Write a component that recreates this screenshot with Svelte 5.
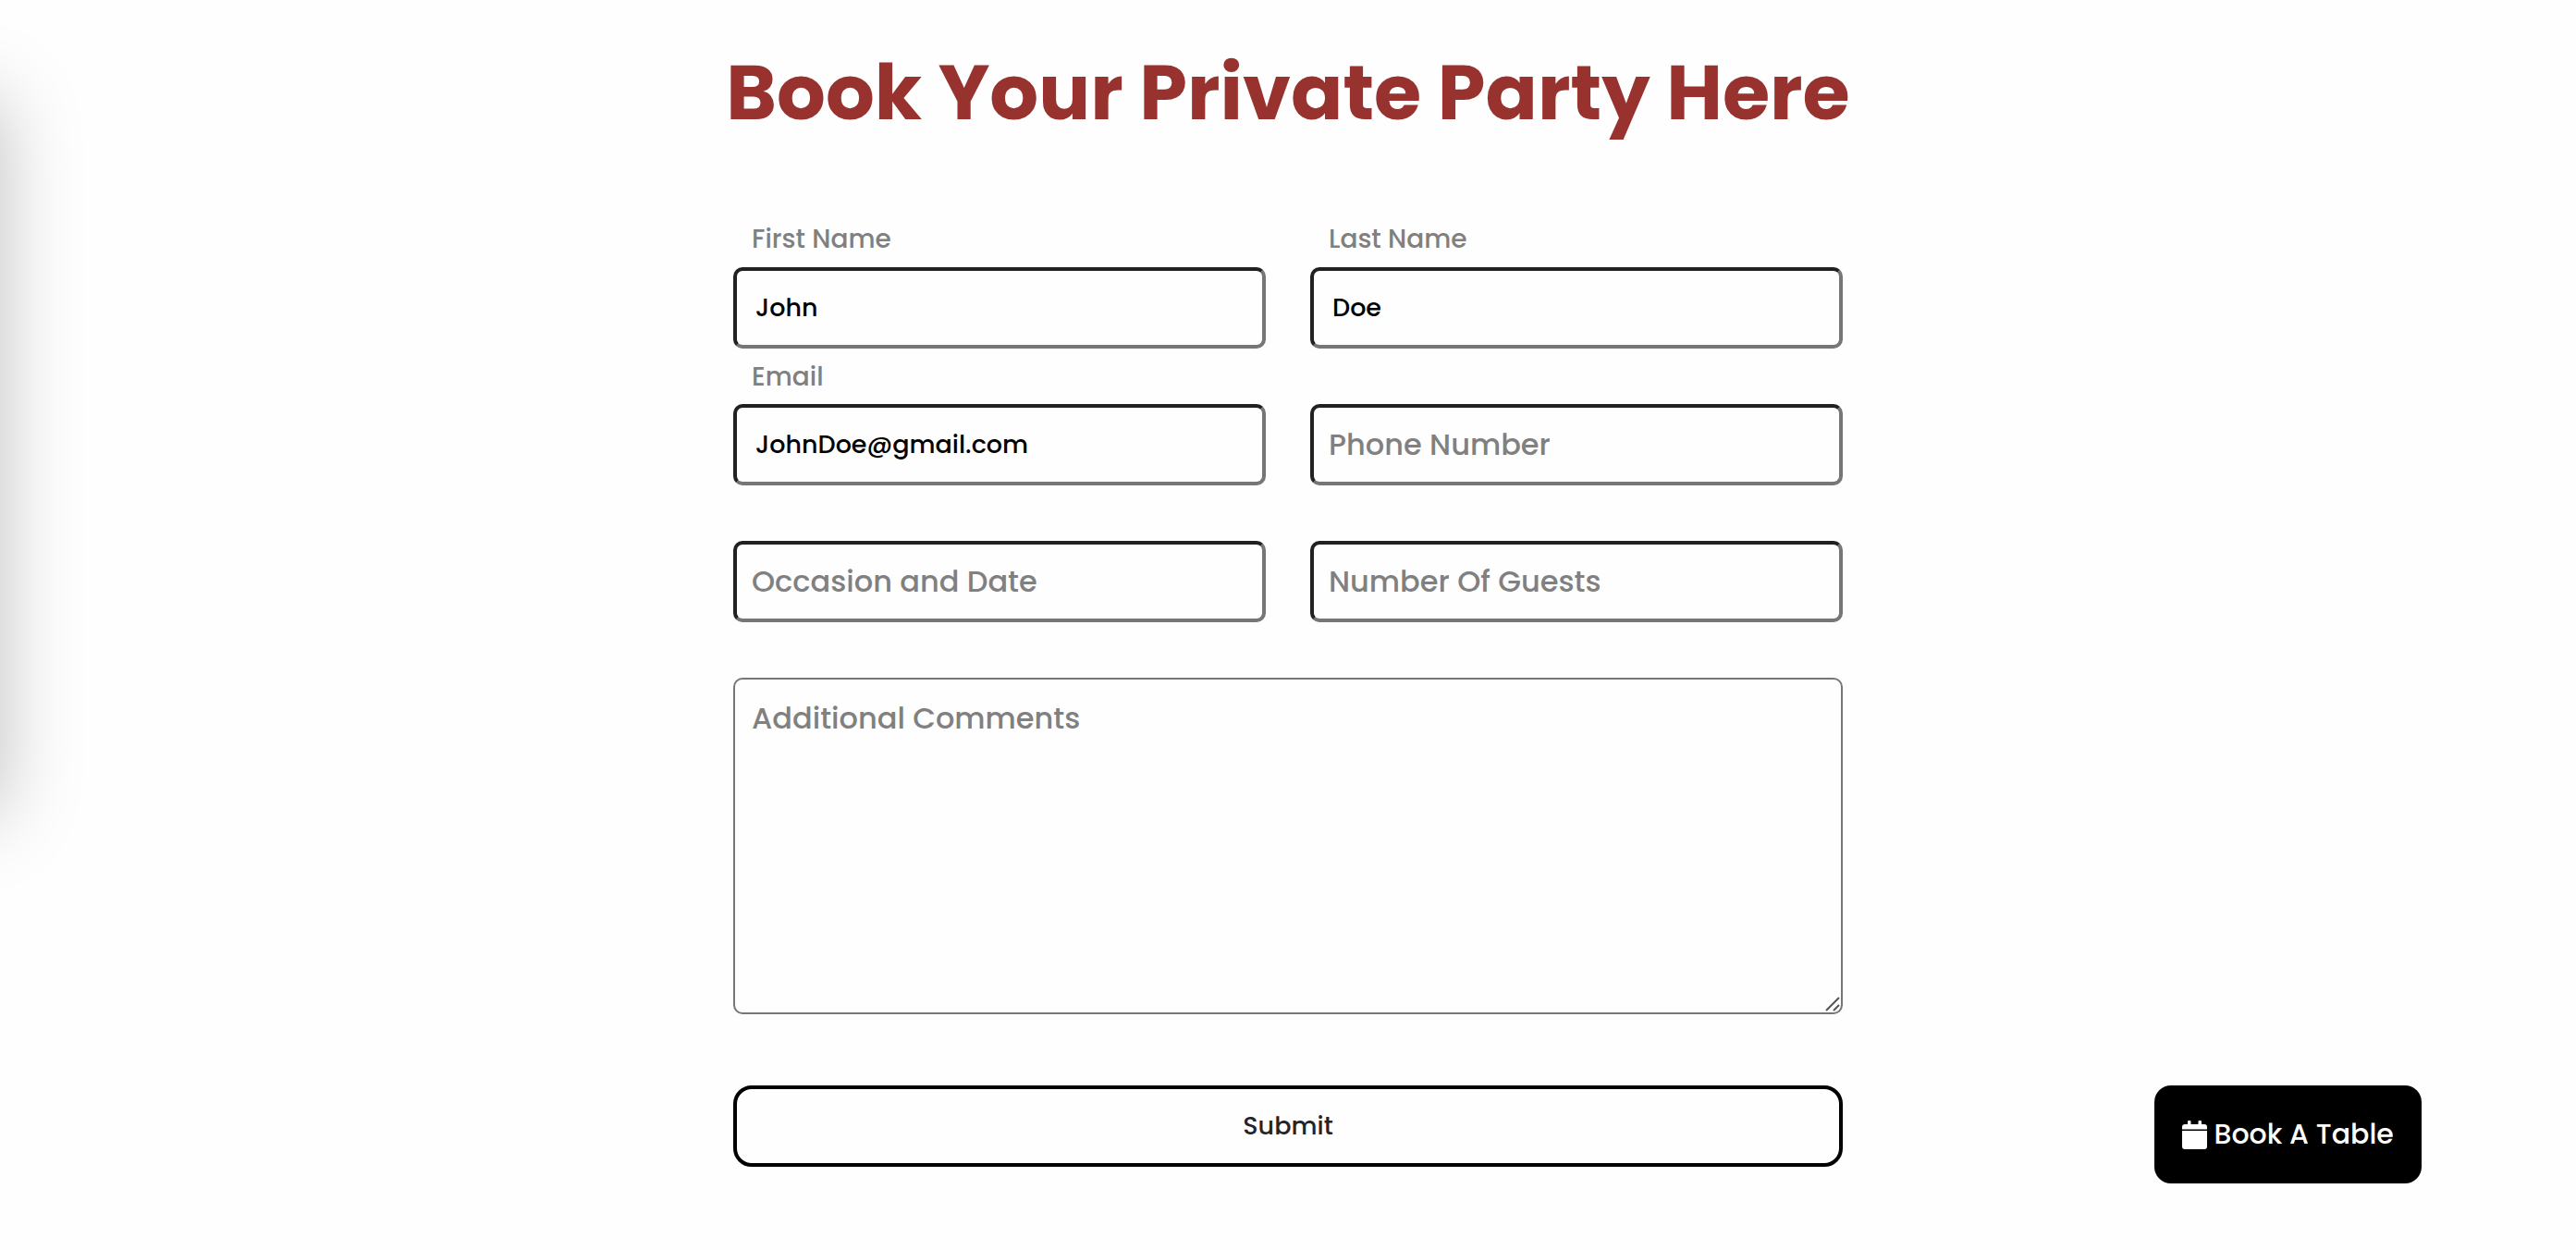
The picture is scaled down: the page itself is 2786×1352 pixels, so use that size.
<script>
  let fields = $state([
    { id: 'first-name', label: 'First Name', type: 'text', value: 'John' },
    { id: 'last-name', label: 'Last Name', type: 'text', value: 'Doe' },
    { id: 'email', label: 'Email', type: 'email', value: 'JohnDoe@gmail.com' },
    { id: 'phone', label: 'Phone Number', type: 'tel', value: '' },
    { id: 'occasion', label: 'Occasion and Date', type: 'text', value: '' },
    { id: 'guests', label: 'Number Of Guests', type: 'text', value: '' },
  ]);
  let comments = $state('');
</script>

<div class="page">
  <div class="side-shadow" aria-hidden="true"></div>
  <main>
    <h1>Book Your Private Party Here</h1>
    <form onsubmit={(e) => e.preventDefault()}>
      {#each fields as field (field.id)}
        <div class="field" class:filled={field.value !== ''}>
          <label for={field.id}>{field.label}</label>
          <input id={field.id} type={field.type} bind:value={field.value} />
        </div>
      {/each}
      <div class="field wide" class:filled={comments !== ''}>
        <label for="comments">Additional Comments</label>
        <textarea id="comments" bind:value={comments}></textarea>
        <svg class="grip" viewBox="0 0 16 16" aria-hidden="true">
          <path d="M1 15L15 1M9 15L15 9" />
        </svg>
      </div>
      <button class="submit" type="submit">Submit</button>
    </form>
  </main>
  <a class="book" href="#book">
    <svg viewBox="0 0 27 31" aria-hidden="true">
      <path d="M6 4V1.5a1.7 1.7 0 0 1 3.5 0V4h8V1.5a1.7 1.7 0 0 1 3.5 0V4h3a3 3 0 0 1 3 3v2.5H0V7a3 3 0 0 1 3-3zM0 11h27v17a3 3 0 0 1-3 3H3a3 3 0 0 1-3-3z" />
    </svg>
    <span>Book A Table</span>
  </a>
</div>

<style>
  :global(body) {
    margin: 0;
    background: #fefefe;
  }
  .page {
    position: relative;
    min-height: 100vh;
    overflow: hidden;
    box-sizing: border-box;
    padding: 40px 24px 88px;
    font-family: Poppins, Inter, "Liberation Sans", sans-serif;
    font-weight: 500;
  }
  .side-shadow {
    position: absolute;
    top: 108px;
    left: -400px;
    width: 400px;
    height: 772px;
    box-shadow: 0 0 80px rgba(0, 0, 0, 0.25);
  }
  h1 {
    margin: 0 0 68px;
    text-align: center;
    font-size: 83px;
    line-height: 120px;
    font-weight: 700;
    color: #97322e;
  }
  form {
    display: grid;
    grid-template-columns: 1fr 1fr;
    column-gap: 48px;
    max-width: 1200px;
    margin: 0 auto;
  }
  .field {
    display: grid;
    grid-template-rows: 61px auto;
  }
  .field:nth-child(n + 3) {
    grid-template-rows: 60px auto;
  }
  .wide,
  .submit {
    grid-column: 1 / -1;
  }
  label {
    grid-area: 2 / 1;
    align-self: start;
    justify-self: start;
    z-index: 1;
    padding-left: 20px;
    font-size: 32px;
    line-height: 88px;
    color: #808080;
    pointer-events: none;
  }
  .filled label {
    grid-area: 1 / 1;
    font-size: 28px;
    line-height: 62px;
  }
  input,
  textarea {
    grid-area: 2 / 1;
    box-sizing: border-box;
    width: 100%;
    background: transparent;
    border-radius: 10px;
    font-family: inherit;
    font-size: 27px;
    font-weight: inherit;
    color: #000;
  }
  input {
    height: 88px;
    padding: 0 20px;
    border: 4px solid #767676;
    border-top-color: #212121;
    border-left-color: #212121;
  }
  textarea {
    display: block;
    height: 364px;
    padding: 24px 20px;
    border: 2px solid #767676;
    resize: vertical;
  }
  textarea::-webkit-resizer {
    background: transparent;
  }
  .grip {
    grid-area: 2 / 1;
    align-self: end;
    justify-self: end;
    width: 16px;
    height: 16px;
    margin: 3px;
    fill: none;
    stroke: #555;
    stroke-width: 2;
    pointer-events: none;
  }
  .submit {
    height: 88px;
    margin-top: 77px;
    background: transparent;
    border: 4px solid #000;
    border-radius: 20px;
    font-family: inherit;
    font-size: 27px;
    font-weight: inherit;
    color: #212529;
  }
  .book {
    position: fixed;
    right: 6%;
    bottom: 72px;
    display: flex;
    align-items: center;
    gap: 8px;
    padding: 30px;
    border-radius: 18px;
    background: #000;
    color: #fff;
    font-size: 30px;
    line-height: 46px;
    text-decoration: none;
  }
  .book svg {
    width: 27px;
    height: 31px;
    fill: currentColor;
  }
</style>
